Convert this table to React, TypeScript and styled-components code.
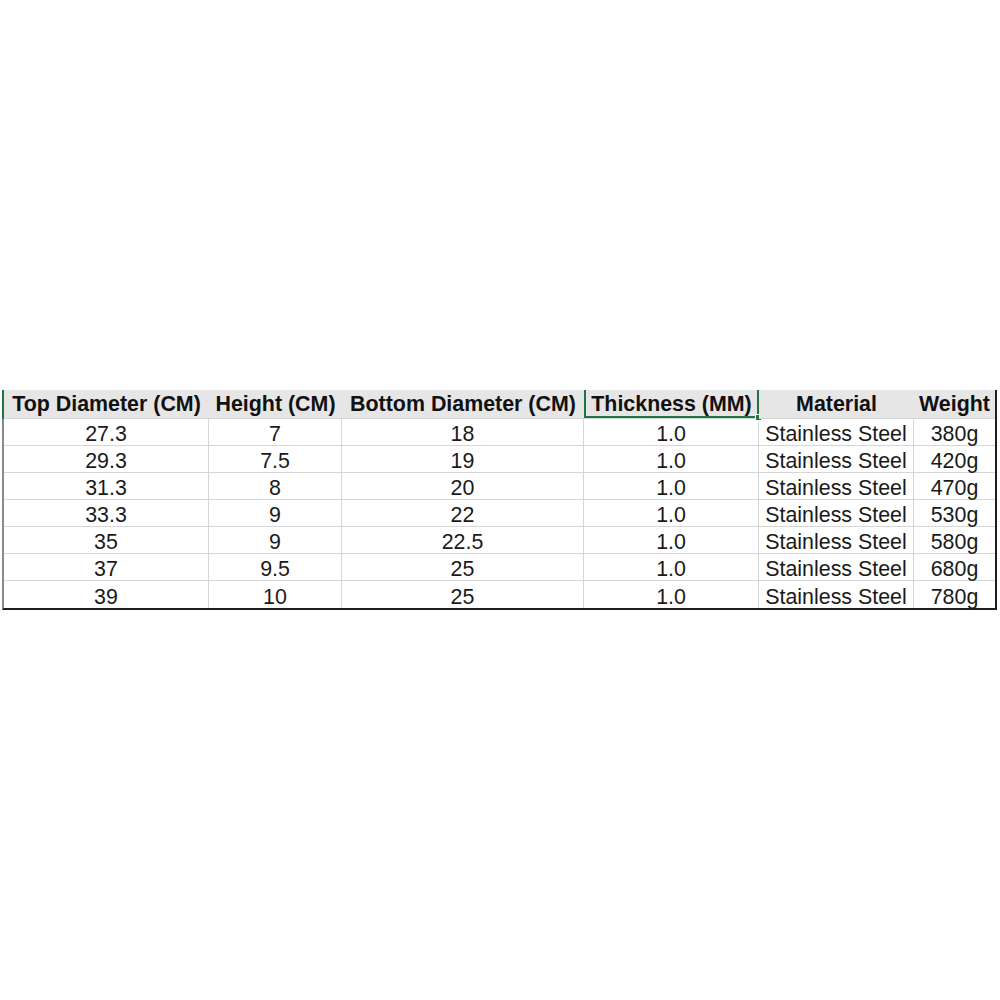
import React from 'react';
import styled, { createGlobalStyle } from 'styled-components';

const GlobalStyle = createGlobalStyle`
  html, body {
    margin: 0;
    padding: 0;
    background: #ffffff;
  }
`;

const Page = styled.div`
  width: 1000px;
  height: 1000px;
  padding: 390px 0 0 2px;
  box-sizing: border-box;
  background: #ffffff;
  font-family: "Liberation Sans", Arial, sans-serif;
`;

const Sheet = styled.div`
  display: grid;
  grid-template-columns: 205px 133px 242px 175px 155px 81px;
  grid-auto-rows: 27px;
  grid-template-rows: 29px;
  width: 995px;
  box-sizing: border-box;
  border-left: 2px solid #8a8a8a;
  border-right: 2px solid #1e1e1e;
  border-bottom: 2px solid #1e1e1e;
`;

// header row, the selected one gets excel's green frame + fill handle
const HeaderCell = styled.div<{ $selected?: boolean; $first?: boolean }>`
  position: relative;
  display: flex;
  align-items: flex-end;
  justify-content: center;
  padding-bottom: 3px;
  box-sizing: border-box;
  background: #e6e6e6;
  border-bottom: 1px solid #d4d4d4;
  font-size: 21.4px;
  line-height: 21px;
  font-weight: 700;
  color: #111111;
  white-space: nowrap;
  box-shadow: ${({ $selected, $first }) =>
    $selected
      ? 'inset 2px 0 0 #217346, inset -2px 0 0 #217346, inset 0 -2px 0 #217346'
      : $first
      ? '-2px 0 0 #217346'
      : 'none'};

  &::after {
    content: '';
    display: ${({ $selected }) => ($selected ? 'block' : 'none')};
    position: absolute;
    right: -3px;
    bottom: -3px;
    width: 5px;
    height: 5px;
    background: #217346;
    border: 1px solid #ffffff;
  }
`;

const Cell = styled.div<{ $last?: boolean }>`
  display: flex;
  align-items: flex-end;
  justify-content: center;
  box-sizing: border-box;
  border-right: ${({ $last }) => ($last ? 'none' : '1px solid #d6d6d6')};
  border-bottom: 1px solid #d6d6d6;
  font-size: 21.4px;
  line-height: 21px;
  color: #1a1a1a;
  white-space: nowrap;
  &:nth-last-child(-n + 6) {
    border-bottom: none;
  }
`;

const headers = [
  'Top Diameter (CM)',
  'Height (CM)',
  'Bottom Diameter (CM)',
  'Thickness (MM)',
  'Material',
  'Weight',
];

const rows = [
  ['27.3', '7', '18', '1.0', 'Stainless Steel', '380g'],
  ['29.3', '7.5', '19', '1.0', 'Stainless Steel', '420g'],
  ['31.3', '8', '20', '1.0', 'Stainless Steel', '470g'],
  ['33.3', '9', '22', '1.0', 'Stainless Steel', '530g'],
  ['35', '9', '22.5', '1.0', 'Stainless Steel', '580g'],
  ['37', '9.5', '25', '1.0', 'Stainless Steel', '680g'],
  ['39', '10', '25', '1.0', 'Stainless Steel', '780g'],
];

const App: React.FC = () => {
  return (
    <>
      <GlobalStyle />
      <Page>
        <Sheet>
          {headers.map((h, i) => (
            <HeaderCell key={h} $selected={i === 3} $first={i === 0}>
              {h}
            </HeaderCell>
          ))}
          {rows.map((row, r) =>
            row.map((value, c) => (
              <Cell key={`${r}-${c}`} $last={c === row.length - 1}>
                {value}
              </Cell>
            ))
          )}
        </Sheet>
      </Page>
    </>
  );
};

export default App;
